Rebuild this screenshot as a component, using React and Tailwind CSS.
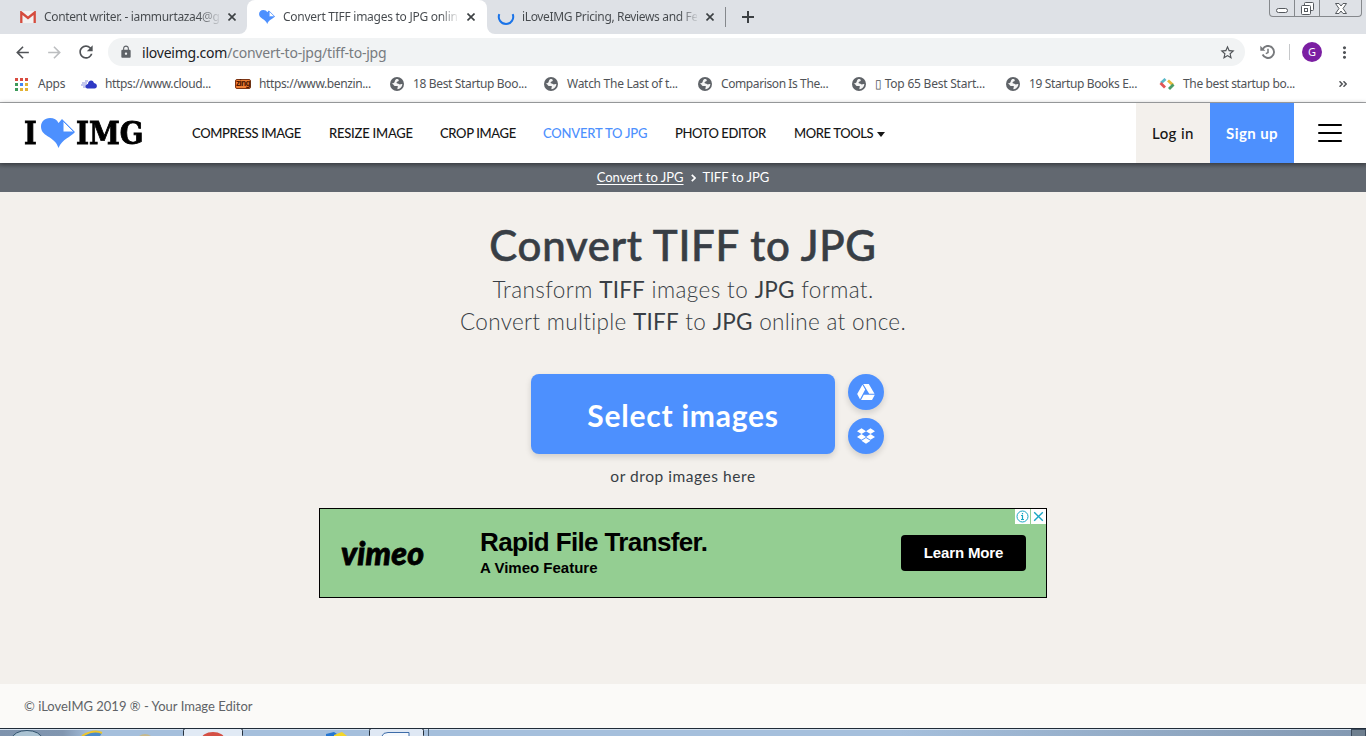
import { MdArrowBack, MdArrowForward, MdRefresh, MdLock, MdStarBorder, MdMoreVert } from "react-icons/md";
import { FaDropbox } from "react-icons/fa";

const UI = "font-['Noto_Sans','Open_Sans',sans-serif]";

function Heart({ className }) {
  return (
    <svg viewBox="0 0 34 30" className={className}>
      <path d="M17.500 30C15.500 24 12 21.500 7 18.500C2 15.500 0 12.500 0 8.500C0 4 3.500 0 9 0C13 0 16 1.500 17.500 5L21 1L34 14C30 19 21 21 17.500 30Z" fill="#4d90fe" />
      <path d="M22 3V14H33Z" fill="#fff" stroke="#4d90fe" strokeWidth="1" strokeLinejoin="round" />
    </svg>
  );
}

function Close({ className }) {
  return (
    <svg viewBox="0 0 8 8" className={`h-2 w-2 shrink-0 ${className}`}>
      <path d="M.5.5 7.500 7.500M7.500.5.5 7.500" stroke="#3c4043" strokeWidth="1.600" />
    </svg>
  );
}

function TabBar() {
  return (
    <div className="flex h-[34px] bg-white whitespace-nowrap">
      <div className="flex h-full w-[247px] items-center rounded-br-lg bg-[#dee1e6] pl-[20px]">
        <svg viewBox="0 0 16 12" className="h-3 w-4 shrink-0">
          <path d="M1 0H15V12H1Z" fill="#f1f1f1" />
          <path d="M1.300 12V1.500L8 7L14.700 1.500V12" fill="none" stroke="#d54b3d" strokeWidth="2.300" />
        </svg>
        <span className="ml-[8px] w-[175px] shrink-0 bg-linear-to-r from-[#45494d] from-88% to-[#45494d20] bg-clip-text text-[12px] tracking-[-0.350px] text-transparent">Content writer. - iammurtaza4@g</span>
        <Close className="ml-[9px]" />
      </div>
      <div className="h-full w-[240px] bg-[#dee1e6]">
        <div className="flex h-full items-center rounded-t-lg bg-white pl-[12px]">
          <Heart className="h-[14px] w-4 shrink-0" />
          <span className="ml-[8px] w-[174px] shrink-0 bg-linear-to-r from-[#45494d] from-90% to-[#45494d20] bg-clip-text text-[12px] tracking-[-0.270px] text-transparent">Convert TIFF images to JPG onlin</span>
          <Close className="ml-[10px]" />
        </div>
      </div>
      <div className="flex h-full flex-1 rounded-bl-lg bg-[#dee1e6]">
        <div className="flex h-full items-center pl-[10px]">
          <svg viewBox="0 0 18 18" className="h-[18px] w-[18px] shrink-0">
            <path d="M2.300 6.200A7.200 7.200 0 1 0 15.700 6.200" fill="none" stroke="#1a73e8" strokeWidth="2" />
          </svg>
          <span className="ml-[7px] w-[175px] shrink-0 bg-linear-to-r from-[#45494d] from-90% to-[#45494d20] bg-clip-text text-[12px] tracking-[-0.350px] text-transparent">iLoveIMG Pricing, Reviews and Fe</span>
          <Close className="ml-[9px]" />
          <div className="ml-[11px] h-5 w-px bg-[#85888c]" />
          <svg viewBox="0 0 12 12" className="ml-4 h-3 w-3"><path d="M6 0V12M0 6H12" stroke="#3c4043" strokeWidth="2" /></svg>
        </div>
        <div className="mr-[4px] ml-auto flex h-[17px] w-[93px] rounded-b border border-t-0 border-[#85888c]">
          <div className="flex w-[25px] items-center justify-center border-r border-[#85888c]">
            <div className="mt-[4px] h-[5px] w-3 rounded-sm border border-[#55595e] bg-white" />
          </div>
          <div className="flex w-[25px] items-center justify-center border-r border-[#85888c]">
            <svg viewBox="0 0 13 13" className="h-[13px] w-[13px]" fill="#fff" stroke="#55595e">
              <rect x="3.500" y=".5" width="9" height="8" rx="1" />
              <rect x=".5" y="3.500" width="9" height="9" rx="1" />
              <rect x="3.500" y="6.500" width="3" height="3" />
            </svg>
          </div>
          <div className="flex flex-1 items-center justify-center">
            <svg viewBox="0 0 12 11" className="h-[11px] w-3" fill="#fff" stroke="#55595e">
              <path d="M.5.5H4L6 3L8 .5H11.500L8 5.500L11.500 10.500H8L6 8L4 10.500H.5L4 5.500Z" />
            </svg>
          </div>
        </div>
      </div>
    </div>
  );
}

function HistoryIcon({ className }) {
  return (
    <svg viewBox="0 0 15 14" className={className} fill="none" stroke="#77797c">
      <path d="M2.600 9.500A6 6 0 1 0 2.800 4" strokeWidth="1.900" />
      <path d="M.3 .8V5.800H5.300Z" fill="#77797c" stroke="none" />
      <path d="M8 3.800V7.600L5.800 8.600" strokeWidth="1.500" />
    </svg>
  );
}

function Toolbar() {
  return (
    <div className="flex h-9 items-center bg-white pl-[13px]">
      <MdArrowBack className="h-[19px] w-[19px] text-[#505357]" />
      <MdArrowForward className="ml-[13px] h-[19px] w-[19px] text-[#bcbec0]" />
      <MdRefresh className="ml-[12px] h-5 w-5 text-[#505357]" />
      <div className="ml-[12px] flex h-7 w-[1137px] items-center rounded-full bg-[#f1f3f4] pl-[11px]">
        <MdLock className="h-[14px] w-[14px] text-[#5f6368]" />
        <span className="ml-[9px] w-[1077px] text-[14px] tracking-[-0.220px] text-[#777b80]">
          <span className="text-[#202124]">iloveimg.com</span>/convert-to-jpg/tiff-to-jpg
        </span>
        <MdStarBorder className="h-[17px] w-[17px] text-[#505357]" />
      </div>
      <HistoryIcon className="ml-[15px] h-[14px] w-[15px]" />
      <div className="ml-[14px] h-4 w-px bg-[#c6c8ca]" />
      <div className="ml-[12px] flex h-5 w-5 items-center justify-center rounded-full bg-[#7b1fa2] text-[11px] text-white">G</div>
      <MdMoreVert className="ml-[13px] h-[19px] w-[19px] text-[#505357]" />
    </div>
  );
}

function Globe() {
  return (
    <svg viewBox="0 0 14 14" className="ml-px h-[14px] w-[14px] shrink-0">
      <circle cx="7" cy="7" r="7" fill="#5f6368" />
      <path d="M6 2.200C7.500 1.800 9 2.500 8.800 3.500C8.500 4.800 6.500 4.300 6.500 5.800C6.500 6.800 8.500 6.300 9.200 7.300C10 7.800 11.300 6.600 12.400 7.200C12 10 10 12 7.600 12.300C6.800 10.800 8.300 10.300 7.800 9.300C6.500 8.600 5 9.600 4 8.500C3.200 7.400 3 7 1.700 7C2.500 6 3.500 6.500 4.300 5.500C5 4.500 4.800 3 6 2.200Z" fill="#f5f5f5" />
    </svg>
  );
}

function Cloud() {
  return (
    <svg viewBox="0 0 16 10" className="h-[10px] w-4 shrink-0">
      <path d="M4 2H7M1 4H6M0 6H5M2 8H6" stroke="#8a92df" strokeWidth="1.200" />
      <path d="M6 9.500C3 8 5 5 7 5C7 1 12 0 13 4C17 4.500 16.500 9.500 13.500 9.500Z" fill="#2e39c4" />
    </svg>
  );
}

function Zing() {
  return (
    <div className="flex h-[10px] w-4 shrink-0 items-center justify-center rounded-[2px] border border-[#7c3514] bg-[#f08035] text-[8px] leading-none font-bold tracking-[-0.700px] text-[#4d1500]">
      <span className="-mt-[2px]">zing</span>
    </div>
  );
}

function Diamonds() {
  return (
    <svg viewBox="0 0 16 12" className="h-3 w-4 shrink-0" fill="none" strokeWidth="2.800">
      <path d="M6.500 1L2 5" stroke="#5bb9c9" />
      <path d="M1.500 5L6 9.500" stroke="#e25555" />
      <path d="M9 2.500L14 7" stroke="#e5b93c" />
      <path d="M14.500 6.500L10 11" stroke="#4a9c67" />
    </svg>
  );
}

const bookmarks = [
  { icon: <Cloud />, label: "https://www.cloud...", track: "tracking-[-0.350px]" },
  { icon: <Zing />, label: "https://www.benzin...", track: "tracking-[-0.380px]" },
  { icon: <Globe />, label: "18 Best Startup Boo...", track: "tracking-[-0.350px]" },
  { icon: <Globe />, label: "Watch The Last of t...", track: "tracking-[-0.280px]" },
  { icon: <Globe />, label: "Comparison Is The...", track: "tracking-[-0.400px]" },
  { icon: <Globe />, label: "▯ Top 65 Best Start...", track: "tracking-[-0.220px]" },
  { icon: <Globe />, label: "19 Startup Books E...", track: "tracking-[-0.360px]" },
  { icon: <Diamonds />, label: "The best startup bo...", track: "tracking-[-0.350px]" },
];

const dots = ["bg-[#d94c40]", "bg-[#d94c40]", "bg-[#d94c40]", "bg-[#3d9a5a]", "bg-[#4285f4]", "bg-[#e3b234]", "bg-[#3d9a5a]", "bg-[#e3b234]", "bg-[#e3b234]"];

function Bookmarks() {
  return (
    <div className="flex h-[33px] items-center border-b border-[#a9abad] bg-white pb-[4px] pl-[15px] text-[12px] whitespace-nowrap text-[#505357]">
      <div className="grid w-[13px] grid-cols-3 gap-[2px]">
        {dots.map((d, i) => <i key={i} className={`h-[3px] w-[3px] ${d}`} />)}
      </div>
      <span className="ml-[10px] w-[43px] tracking-[-0.250px]">Apps</span>
      {bookmarks.map((b) => (
        <div key={b.label} className="flex w-[154px] shrink-0 items-center gap-2">
          {b.icon}
          <span className={`${b.track} ${b.icon.type === Globe ? "ml-px" : ""}`}>{b.label}</span>
        </div>
      ))}
      <svg viewBox="0 0 8 6" className="ml-[26px] h-[6px] w-2 shrink-0" fill="none" stroke="#505357" strokeWidth="1.500"><path d="M.5.3 3.200 3 .5 5.700M4.500.3 7.200 3 4.500 5.700" /></svg>
    </div>
  );
}

function SiteHeader() {
  return (
    <header className="relative flex h-[60px] items-center bg-white font-['Lato',sans-serif] shadow-[0_1px_5px_rgba(0,0,0,0.4)]">
      <div className="ml-[24px] flex w-[168px] items-center font-['DejaVu_Serif',serif] text-[32px] leading-none font-bold whitespace-nowrap text-black [-webkit-text-stroke:0.900px_black]">
        <span className="w-[17px] origin-left scale-x-[0.850]">I</span>
        <Heart className="h-[30px] w-[34px] shrink-0" />
        <span className="ml-px origin-left scale-x-[0.870]">IMG</span>
      </div>
      <nav className="flex items-center pt-[2px] text-[13px] font-medium whitespace-nowrap text-[#161616]">
        <a className="w-[137px] tracking-[-0.320px]">COMPRESS IMAGE</a>
        <a className="w-[111px] tracking-[-0.220px]">RESIZE IMAGE</a>
        <a className="w-[103px] tracking-[-0.350px]">CROP IMAGE</a>
        <a className="w-[132px] tracking-[-0.180px] text-[#4d90fe]">CONVERT TO JPG</a>
        <a className="w-[119px] tracking-[-0.420px]">PHOTO EDITOR</a>
        <a className="w-[83px] tracking-[-0.380px]">MORE TOOLS</a>
        <svg viewBox="0 0 8 5" className="h-[5px] w-2 shrink-0"><path d="M0 0H8L4 5Z" fill="#161616" /></svg>
      </nav>
      <div className="ml-auto flex h-full items-center text-[15px]">
        <a className="flex h-full w-[74px] items-center justify-center bg-[#f3f0ec] font-medium tracking-[0.400px] text-[#161616]">Log in</a>
        <a className="flex h-full w-[84px] items-center justify-center bg-[#4d90fe] font-bold tracking-[0.400px] text-white">Sign up</a>
        <div className="mr-6 ml-6 flex w-6 flex-col gap-[6px]">
          <i className="h-[2px] rounded bg-black" />
          <i className="h-[2px] rounded bg-black" />
          <i className="h-[2px] rounded bg-black" />
        </div>
      </div>
    </header>
  );
}

function Breadcrumb() {
  return (
    <div className="flex h-[29px] items-center justify-center bg-[#626870] bg-linear-to-b from-black/15 to-transparent to-20% font-['Lato',sans-serif] text-[13px] whitespace-nowrap text-white">
      <a className="underline underline-offset-2">Convert to JPG</a>
      <svg viewBox="0 0 5 8" className="mx-[7px] h-2 w-[5px]"><path d="M.8.8 4 4 .8 7.200" fill="none" stroke="#fff" strokeWidth="1.700" /></svg>
      <span>TIFF to JPG</span>
    </div>
  );
}

function DriveIcon() {
  return (
    <svg viewBox="0 0 18 16" className="h-4 w-[18px]" fill="#fff">
      <path d="M6.200 0H11.800L17.500 9.700H12.200Z" />
      <path d="M5.400.8L8.200 5.500L3 15.300L.2 10Z" />
      <path d="M6.800 10.700H17.800L15 16H4Z" />
    </svg>
  );
}

function Ad() {
  return (
    <div className="relative mx-auto mt-[21px] flex h-[90px] w-[728px] items-center border border-black bg-[#94ce92] text-left text-black">
      <span className="ml-[21px] w-[139px] font-['Lato',sans-serif] text-[32px] leading-none font-black tracking-[0.300px] italic [-webkit-text-stroke:0.800px_black]">vimeo</span>
      <div className="w-[421px] font-['Liberation_Sans',sans-serif] font-bold">
        <p className="-mt-px text-[26px] leading-[30px] tracking-[-0.630px]">Rapid File Transfer.</p>
        <p className="mt-px text-[15px] leading-5 tracking-[0px]">A Vimeo Feature</p>
      </div>
      <button className="h-9 w-[125px] rounded bg-black font-['Liberation_Sans',sans-serif] text-[15px] font-bold tracking-[-0.150px] text-white">Learn More</button>
      <div className="absolute top-0 right-0 flex gap-px">
        <svg viewBox="0 0 15 15" className="h-[15px] w-[15px] bg-white" fill="none" stroke="#1aa7c4"><circle cx="7.500" cy="7.500" r="5.500" /><path d="M6 6.500H7.500V10.500M6 10.500H9M7.500 4V5.300" strokeWidth="1.200" /></svg>
        <svg viewBox="0 0 15 15" className="h-[15px] w-[15px] bg-white" fill="none" stroke="#1aa7c4" strokeWidth="1.400"><path d="M3.200 3.200 11.800 11.800M11.800 3.200 3.200 11.800" /></svg>
      </div>
    </div>
  );
}

function Main() {
  return (
    <main className="h-[492px] bg-[#f3f0ec] pt-[27px] text-center font-['Lato',sans-serif] text-[#383e45]">
      <h1 className="text-[42px] leading-[52px] font-medium tracking-[0.700px] [-webkit-text-stroke:0.600px_#383e45]">Convert TIFF to JPG</h1>
      <p className="mt-[3px] text-[22.500px] leading-8 font-light tracking-[0.400px]">Transform <b className="tracking-[0.200px]">TIFF</b> images to <b className="tracking-[0.200px]">JPG</b> format.</p>
      <p className="text-[22.500px] leading-8 font-light tracking-[0.320px]">Convert multiple <b className="tracking-[0.200px]">TIFF</b> to <b className="tracking-[0.200px]">JPG</b> online at once.</p>
      <div className="mt-[36px] ml-[531px] flex gap-[13px]">
        <button className="h-20 w-[304px] rounded-lg bg-[#4d90fe] pt-[3px] text-[30px] font-bold tracking-[0.750px] text-white shadow-[0_3px_6px_rgba(0,0,0,0.14)]">Select images</button>
        <div className="flex flex-col gap-2">
          <div className="flex h-9 w-9 items-center justify-center rounded-full bg-[#4d90fe] shadow-[0_3px_6px_rgba(0,0,0,0.14)]"><DriveIcon /></div>
          <div className="flex h-9 w-9 items-center justify-center rounded-full bg-[#4d90fe] text-white shadow-[0_3px_6px_rgba(0,0,0,0.14)]"><FaDropbox className="h-[18px] w-[18px]" /></div>
        </div>
      </div>
      <p className="mt-[11px] text-[15.500px] leading-[22px] tracking-[0.550px]">or drop images here</p>
      <Ad />
    </main>
  );
}

function Taskbar() {
  return (
    <div className="h-2 overflow-hidden border-t border-[#202b38] bg-[#a5bfdc]">
      <svg viewBox="0 0 1366 7" className="h-[7px] w-[1366px]">
        <defs>
          <linearGradient id="bar"><stop offset="0" stopColor="#7e93ad" /><stop offset=".7" stopColor="#8196b0" /><stop offset="1" stopColor="#a5bfdc" /></linearGradient>
          <linearGradient id="tray"><stop offset="0" stopColor="#a5bfdc" /><stop offset="1" stopColor="#8298b1" /></linearGradient>
        </defs>
        <rect width="90" height="7" fill="url(#bar)" />
        <rect x="900" width="466" height="7" fill="url(#tray)" />
        <path d="M0 .5H1366" stroke="#d3e0ee" />
        <ellipse cx="27" cy="10" rx="15" ry="8.500" fill="#abc3d3" stroke="#31536d" />
        <path d="M83 7Q91 1 102 4L100 7" fill="#4a8acb" />
        <path d="M82 7Q94 0 102 4" fill="none" stroke="#edc52d" strokeWidth="2" />
        <path d="M139 7Q145 3 151 7Z" fill="#c7b98b" />
        <rect x="183.500" y="-.5" width="59" height="9" rx="2" fill="#e1eaf5" stroke="#28333f" />
        <ellipse cx="213" cy="11" rx="12" ry="8" fill="#d45045" />
        <path d="M326 5L334 3L340 7H326Z" fill="#2476d2" /><path d="M334 6L342 3L347 7H334Z" fill="#f4d629" />
        <rect x="369.500" y="-.5" width="54" height="9" rx="2" fill="#dfe8f4" stroke="#28333f" />
        <path d="M382 7Q383 3.500 388 3.500H409V7" fill="#f5f8fc" stroke="#3d6ca9" /><path d="M428.500 0V7" stroke="#4e6378" />
        <rect x="1351.500" y=".5" width="14" height="9" fill="#6f8090" stroke="#3c4b5c" />
      </svg>
    </div>
  );
}

export default function App() {
  return (
    <div className={`h-[736px] w-[1366px] overflow-hidden bg-white ${UI}`}>
      <TabBar />
      <Toolbar />
      <Bookmarks />
      <SiteHeader />
      <Breadcrumb />
      <Main />
      <footer className="h-11 bg-[#fbfaf8] pl-6 font-['Lato',sans-serif] text-[13px] leading-[44px] text-[#606367]">© iLoveIMG 2019 ® - Your Image Editor</footer>
      <Taskbar />
    </div>
  );
}
